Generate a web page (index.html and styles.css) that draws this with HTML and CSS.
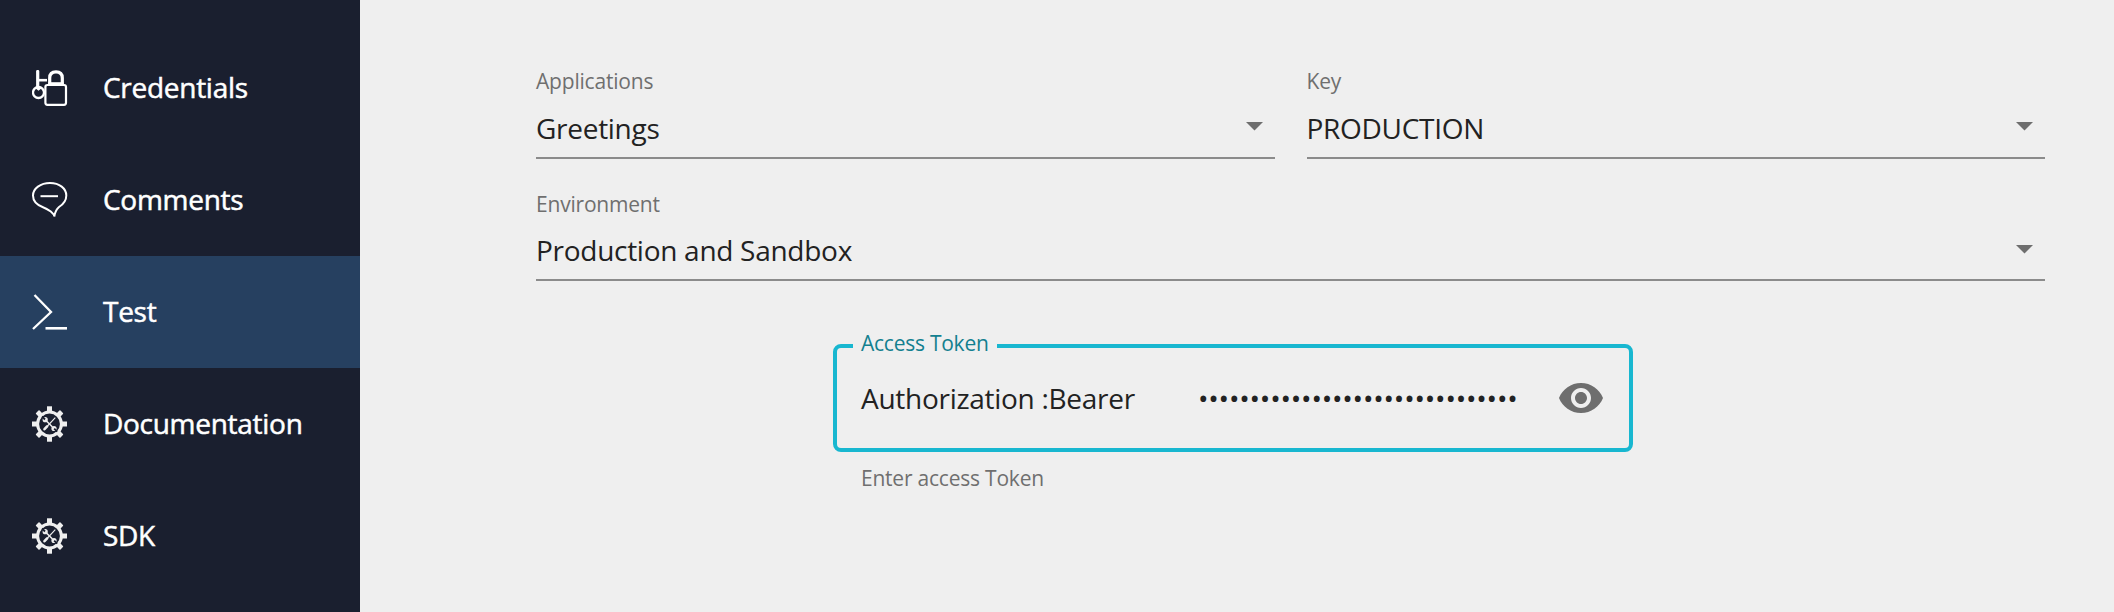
FILE: index.html
```html
<!DOCTYPE html>
<html lang="en">
<head>
<meta charset="utf-8">
<title>Test</title>
<link rel="stylesheet" href="styles.css">
</head>
<body>
<svg class="sprite" width="0" height="0">
  <symbol id="gear" viewBox="-18 -18 36 36">
    <g fill="#efefef">
      <rect x="-3" y="-17.7" width="5" height="6"/>
      <rect x="-3" y="11.7" width="5" height="6"/>
      <rect x="-18" y="-2.5" width="6" height="5"/>
      <rect x="11" y="-2.500" width="6" height="5"/>
      <g transform="translate(-.5 0) rotate(45)">
        <rect x="-2.5" y="-17.300" width="5" height="6" rx=".8"/>
        <rect x="-2.5" y="11.300" width="5" height="6" rx=".8"/>
        <rect x="-17.300" y="-2.500" width="6" height="5" rx=".8"/>
        <rect x="11.300" y="-2.500" width="6" height="5" rx=".8"/>
      </g>
    </g>
    <g transform="translate(-.5 0)">
      <circle r="11.900" fill="none" stroke="#efefef" stroke-width="3"/>
      <circle cx="-4.300" cy="-4.300" r="2.600" fill="#efefef"/>
      <circle cx="4.500" cy="4.500" r="2.600" fill="#efefef"/>
      <g stroke="#1a1f2f" stroke-width="1.900">
        <path d="M-7.500-7.500L-4.500-4.500M7.700 7.700L4.700 4.700"/>
      </g>
      <path d="M-3-3L3 3" stroke="#efefef" stroke-width="1.500"/>
      <path d="M5.800-6.300L-2 2" stroke="#efefef" stroke-width="1.100"/>
      <path d="M-2.400 2.400L-5 5.200" stroke="#efefef" stroke-width="2.600" stroke-linecap="round"/>
    </g>
  </symbol>
</svg>
<div class="page">
  <nav class="menu">
    <a class="item">
      <svg class="icon" viewBox="0 0 36 36" fill="none" stroke="#fff">
        <path d="M5.7 1.5V16.5" stroke-width="3.2" stroke-linecap="round"/>
        <path d="M6 10.2H15" stroke-width="2.6"/>
        <circle cx="6.5" cy="22.5" r="5.5" stroke-width="2.3"/>
        <path d="M4 17.5L6.500 19.500L9 17.500" stroke-width="2"/>
        <path d="M17.7 14V8Q17.7 1.900 24 1.900T30.3 8V14" stroke-width="3.2"/>
        <path d="M16.5 13.6H31.5" stroke-width="2.8"/>
        <rect x="13.4" y="15" width="20.6" height="19.800" rx="2" stroke-width="2.2"/>
      </svg>
      <span class="name">Credentials</span>
    </a>
    <a class="item">
      <svg class="icon" viewBox="0 0 36 36" fill="none" stroke="#fff" stroke-width="2">
        <path d="M22.3 34.500C22 31.5 17 27.500 11 25.200C5 23 1 19 1 13.500C1 6.500 8.500 1 18 1S34.300 6.500 34.300 13.500C34.300 19 31 22.500 27 25C24 27.500 22.800 31 22.300 34.500Z"/>
        <path d="M8.500 14.200H26"/>
      </svg>
      <span class="name">Comments</span>
    </a>
    <a class="item active">
      <svg class="icon" viewBox="0 0 36 36" fill="none" stroke="#fff">
        <path d="M2.500 1L19 18L1 35" stroke-width="2.300"/>
        <path d="M13.500 34.300H35" stroke-width="2.600"/>
      </svg>
      <span class="name">Test</span>
    </a>
    <a class="item">
      <svg class="icon"><use href="#gear"/></svg>
      <span class="name">Documentation</span>
    </a>
    <a class="item">
      <svg class="icon"><use href="#gear"/></svg>
      <span class="name">SDK</span>
    </a>
  </nav>
  <main class="content">
    <div class="row">
      <div class="field">
        <label class="label">Applications</label>
        <div class="select"><span>Greetings</span><svg class="arrow" viewBox="0 0 18 9"><path d="M0 0H17L8.500 8.500Z"/></svg></div>
      </div>
      <div class="field">
        <label class="label">Key</label>
        <div class="select"><span>PRODUCTION</span><svg class="arrow" viewBox="0 0 18 9"><path d="M0 0H17L8.500 8.500Z"/></svg></div>
      </div>
    </div>
    <div class="row environment">
      <div class="field">
        <label class="label">Environment</label>
        <div class="select"><span>Production and Sandbox</span><svg class="arrow" viewBox="0 0 18 9"><path d="M0 0H17L8.500 8.500Z"/></svg></div>
      </div>
    </div>
    <div class="token">
      <fieldset class="outline">
        <legend class="legend">Access Token</legend>
        <div class="entry">
          <span class="prefix">Authorization :Bearer</span>
          <span class="secret">•••••••••••••••••••••••••••••••</span>
          <svg class="eye" viewBox="0 0 24 24"><path d="M12 4.500C7 4.500 2.730 7.610 1 12c1.730 4.390 6 7.500 11 7.500s9.270-3.110 11-7.500c-1.730-4.390-6-7.500-11-7.500zM12 17c-2.760 0-5-2.240-5-5s2.240-5 5-5 5 2.240 5 5-2.240 5-5 5zm0-8c-1.660 0-3 1.340-3 3s1.340 3 3 3 3-1.340 3-3-1.340-3-3-3z"/></svg>
        </div>
      </fieldset>
      <p class="helper">Enter access Token</p>
    </div>
  </main>
</div>
</body>
</html>
```
FILE: styles.css
```css
* { box-sizing: border-box; }
body {
  margin: 0;
  font-family: "Open Sans", "Noto Sans", sans-serif;
  font-size: 28px;
  line-height: 40px;
  letter-spacing: -0.28px;
  color: #222;
  background: #efefef;
}
.sprite { display: block; }
.page { display: flex; height: 612px; overflow: hidden; }
.menu {
  width: 360px;
  flex: none;
  padding-top: 32px;
  background: #1a1f2f;
  color: #fff;
}
.item {
  display: flex;
  align-items: center;
  height: 112px;
  padding-left: 32px;
}
.item.active { background: #264060; }
.icon { width: 36px; height: 36px; flex: none; }
.name {
  margin-left: 35px;
  padding-bottom: 2px;
  font-weight: 500;
  -webkit-text-stroke: 0.5px #fff;
  white-space: nowrap;
}
.content { flex: 1; padding: 70px 69px 0 176px; }
.row { display: flex; gap: 32px; }
.environment { margin-top: 34px; }
.field { flex: 1; }
.label {
  display: block;
  font-size: 21px;
  line-height: 22px;
  letter-spacing: -0.2px;
  margin-bottom: 16px;
  color: #6f6f6f;
}
.environment .label { margin-bottom: 15px; }
.select {
  display: flex;
  justify-content: space-between;
  height: 51px;
  border-bottom: 2px solid #8b8b8b;
}
.arrow { width: 18px; height: 9px; margin: 14px 11px 0 0; fill: #6e6e6e; }
.environment .arrow { margin-top: 15px; }
.token { width: 800px; margin: 51px auto 0 297px; }
.outline {
  height: 120px;
  margin: 0;
  padding: 0 24px 0 16px;
  border: 4px solid #18b7d0;
  border-radius: 8px;
}
.legend {
  padding: 0 8px 6px;
  font-size: 21px;
  line-height: 22px;
  letter-spacing: -0.25px;
  color: #13808f;
}
.entry { display: flex; align-items: center; padding: 14px 0 0 8px; }
.prefix { width: 337px; white-space: nowrap; }
.secret { flex: 1; white-space: nowrap; letter-spacing: -0.22px; }
.eye { width: 48px; height: 48px; fill: #6e6e6e; }
.helper { margin: 15px 0 0 28px; font-size: 21px; line-height: 22px; letter-spacing: -0.22px; color: #6f6f6f; }
```
